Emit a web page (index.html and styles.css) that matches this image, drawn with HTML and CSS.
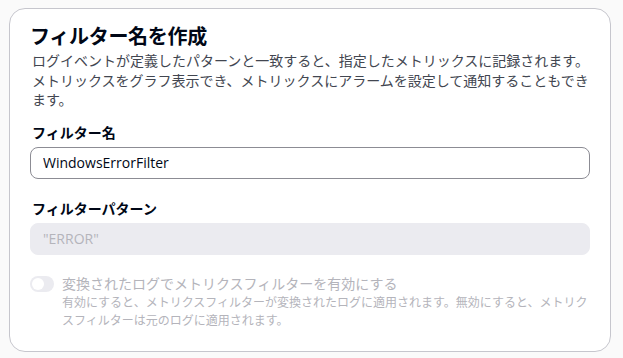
FILE: index.html
```html
<!DOCTYPE html>
<html lang="ja">
<head>
    <meta charset="UTF-8">
    <meta name="viewport" content="width=device-width, initial-scale=1.0">
    <title>フィルター名を作成</title>
    <link rel="stylesheet" href="styles.css">
</head>
<body>
    <div class="container">
        <div class="header">
            <h2>フィルター名を作成</h2>
            <p class="description">ログイベントが定義したパターンと一致すると、指定したメトリックスに記録されます。メトリックスをグラフ表示でき、メトリックスにアラームを設定して通知することもできます。</p>
        </div>

        <div class="form-group">
            <label for="filter-name">フィルター名</label>
            <input type="text" id="filter-name" value="WindowsErrorFilter">
        </div>

        <div class="form-group">
            <label for="filter-pattern">フィルターパターン</label>
            <input type="text" id="filter-pattern" value="&quot;ERROR&quot;" disabled>
        </div>

        <div class="toggle-row">
            <span class="toggle"><span class="knob"></span></span>
            <div class="toggle-text">
                <div class="toggle-label">変換されたログでメトリクスフィルターを有効にする</div>
                <div class="toggle-desc">有効にすると、メトリクスフィルターが変換されたログに適用されます。無効にすると、メトリクスフィルターは元のログに適用されます。</div>
            </div>
        </div>
    </div>
</body>
</html>
```

FILE: styles.css
```css
body {
    font-family: 'Open Sans', 'Noto Sans CJK JP', sans-serif;
    background-color: #fafafa;
    margin: 0;
    padding: 8px 12px 0 9px;
    color: #000716;
}
.container {
    background-color: white;
    border: 1px solid #c6c6cd;
    border-radius: 16px;
    padding: 14px 20px 21px 20px;
}
h2 {
    font-size: 20px;
    line-height: 28px;
    font-weight: bold;
    letter-spacing: -0.3px;
    margin: 0;
}
.description {
    font-size: 14px;
    line-height: 19.5px;
    color: #424650;
    margin: 0 0 0 2px;
}
.form-group {
    margin-top: 13px;
}
.form-group + .form-group {
    margin-top: 20px;
}
label {
    display: block;
    font-size: 14px;
    line-height: 20px;
    font-weight: bold;
    margin: 0 0 4px 2px;
}
input[type="text"] {
    display: block;
    box-sizing: border-box;
    width: 100%;
    height: 32px;
    padding: 0 12px;
    border: 1px solid #8c8c94;
    border-radius: 8px;
    font-family: 'Open Sans', 'Noto Sans CJK JP', sans-serif;
    font-size: 14px;
    color: #000716;
    background: white;
}
input[type="text"]:disabled {
    background-color: #ebebf0;
    border-color: #ebebf0;
    color: #b4b4bb;
}
.toggle-row {
    display: flex;
    gap: 8px;
    margin-top: 19px;
}
.toggle {
    flex: none;
    width: 24px;
    height: 16px;
    margin-top: 2px;
    border-radius: 8px;
    background-color: #ebebf0;
    position: relative;
}
.knob {
    position: absolute;
    left: 2px;
    top: 2px;
    width: 12px;
    height: 12px;
    border-radius: 50%;
    background-color: white;
}
.toggle-text {
    color: #b4b4bb;
}
.toggle-label {
    font-size: 14px;
    line-height: 20px;
}
.toggle-desc {
    font-size: 12px;
    line-height: 18px;
}
```
